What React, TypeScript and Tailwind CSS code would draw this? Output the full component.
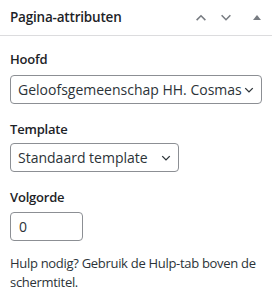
const Chevron = ({ dir, className }: { dir: "up" | "down"; className?: string }) => (
  <svg viewBox="0 0 12 8" className={className} fill="none" stroke="currentColor" strokeWidth="1.8">
    {dir === "up" ? <path d="M1 7 L6 2 L11 7" /> : <path d="M1 1.5 L6 6.5 L11 1.5" />}
  </svg>
);

const SelectBox = ({ value, className }: { value: string; className?: string }) => (
  <div
    className={`relative flex h-[29px] items-center rounded-[4px] border border-[#8c8f94] bg-white pl-[7px] pr-[16px] text-[14px] text-[#2c3338] ${className ?? ""}`}
  >
    <span className="min-w-0 flex-1 overflow-hidden whitespace-nowrap">{value}</span>
    <Chevron dir="down" className="absolute right-[7px] top-[11px] h-[6px] w-[10px] text-[#2c3338]" />
  </div>
);

export default function App() {
  return (
    <div className="h-[300px] w-[272px] bg-white font-['Open_Sans',sans-serif] text-[#1d2327]">
      <div className="flex h-[36px] items-center justify-between border-b border-[#dcdcde] pl-[10px] pr-[11px]">
        <h2 className="text-[13.5px] font-semibold tracking-[-0.2px]">Pagina-attributen</h2>
        <div className="flex items-center text-[#787c82]">
          <Chevron dir="up" className="mr-[13px] h-[7px] w-[12px]" />
          <Chevron dir="down" className="mr-[21px] h-[7px] w-[12px]" />
          <svg viewBox="0 0 8 5" className="h-[5px] w-[8px]" fill="currentColor">
            <path d="M0 5 L4 0 L8 5 Z" />
          </svg>
        </div>
      </div>
      <div className="px-[10px]">
        <p className="mt-[14px] text-[13px] font-semibold leading-[18px] tracking-[-0.2px]">Hoofd</p>
        <SelectBox value="Geloofsgemeenschap HH. Cosmas en Damianus" className="mt-[7px] w-[252px]" />
        <p className="mt-[16px] text-[13px] font-semibold leading-[18px] tracking-[-0.2px]">Template</p>
        <SelectBox value="Standaard template" className="mt-[5px] w-[169px]" />
        <p className="mt-[16px] text-[13px] font-semibold leading-[18px] tracking-[-0.2px]">Volgorde</p>
        <div className="mt-[6px] flex h-[29px] w-[73px] items-center rounded-[4px] border border-[#8c8f94] pl-[8px] text-[14px] text-[#2c3338]">
          0
        </div>
        <p className="mt-[13px] text-[13px] leading-[19px] tracking-[-0.3px] text-[#2c3338]">
          Hulp nodig? Gebruik de Hulp-tab boven de schermtitel.
        </p>
      </div>
    </div>
  );
}
